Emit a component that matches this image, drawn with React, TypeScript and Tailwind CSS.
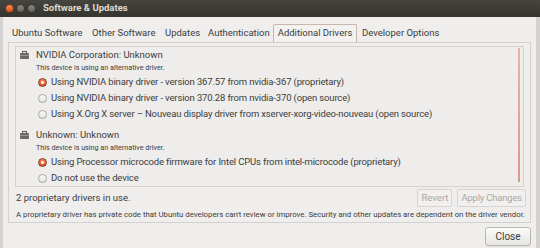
import React from "react";

const font = { fontFamily: 'Roboto, "Noto Sans", sans-serif' };

function Radio({ checked }: { checked?: boolean }) {
  if (checked) {
    return (
      <span className="w-[9px] h-[9px] rounded-full border border-[#8a3b1d] bg-gradient-to-b from-[#f38a5a] to-[#d5501c] flex items-center justify-center shrink-0">
        <span className="w-[3px] h-[3px] rounded-full bg-white" />
      </span>
    );
  }
  return (
    <span className="w-[9px] h-[9px] rounded-full border border-[#a8a6a2] bg-gradient-to-b from-[#fbfbfb] to-[#e4e3e1] shrink-0" />
  );
}

function Chip() {
  return (
    <svg width="9" height="8" viewBox="0 0 9 8" className="shrink-0">
      <rect x="2.5" y="0.5" width="4" height="2" fill="none" stroke="#5e5c58" strokeWidth="1" />
      <rect x="0" y="2" width="9" height="6" rx="1" fill="#6b6964" />
      <rect x="0" y="4" width="9" height="1" fill="#9b9994" />
    </svg>
  );
}

function Row({ checked, text }: { checked?: boolean; text: string }) {
  return (
    <div className="flex items-center gap-[4px] h-[16px] pl-[18px] text-[9.5px] tracking-[-0.15px] text-[#3c3c3c] whitespace-nowrap">
      <Radio checked={checked} />
      <span>{text}</span>
    </div>
  );
}

function Device({ name, rows }: { name: string; rows: { checked?: boolean; text: string }[] }) {
  return (
    <div className="flex flex-col">
      <div className="flex items-center gap-[7px] h-[14px] text-[9.5px] text-[#3c3c3c] whitespace-nowrap">
        <Chip />
        <span>{name}</span>
      </div>
      <div className="pl-[16px] h-[12px] text-[7.2px] text-[#3c3c3c] leading-[12px] whitespace-nowrap">
        This device is using an alternative driver.
      </div>
      {rows.map((r, i) => (
        <Row key={i} checked={r.checked} text={r.text} />
      ))}
    </div>
  );
}

export default function App() {
  return (
    <div style={font} className="w-[540px] h-[248px] flex flex-col overflow-hidden bg-[#efeeed]">
      {/* Title bar */}
      <div className="h-[17px] shrink-0 flex items-center bg-gradient-to-b from-[#45443f] to-[#35342f] px-[5px]">
        <div className="flex items-center gap-[2px]">
          <span className="w-[9px] h-[9px] rounded-full bg-gradient-to-b from-[#f58a5c] to-[#d8511d] border border-[#7a3a1c]" />
          <span className="w-[9px] h-[9px] rounded-full bg-gradient-to-b from-[#8a8882] to-[#65635e] border border-[#3a3935]" />
          <span className="w-[9px] h-[9px] rounded-full bg-gradient-to-b from-[#8a8882] to-[#65635e] border border-[#3a3935]" />
        </div>
        <span className="ml-[7px] text-[9.5px] font-bold text-[#dfdbd2] whitespace-nowrap">Software &amp; Updates</span>
      </div>

      {/* Body */}
      <div className="flex-1 flex flex-col border-l-[3px] border-r-[4px] border-[#d4d3d1] px-[5px]">
        {/* Tabs */}
        <div className="flex items-end h-[25px] ml-[-1px] text-[9.5px] text-[#3c3c3c] whitespace-nowrap">
          <span className="w-[80px] px-[5px] h-[17px] flex items-center">Ubuntu Software</span>
          <span className="w-[73px] px-[5px] h-[17px] flex items-center">Other Software</span>
          <span className="w-[43px] px-[5px] h-[17px] flex items-center">Updates</span>
          <span className="w-[70px] px-[5px] h-[17px] flex items-center">Authentication</span>
          <span className="w-[84px] h-[18px] flex items-center justify-center border border-b-0 border-[#c9b6ad] rounded-t-[2px] bg-[#f3f2f1]">Additional Drivers</span>
          <span className="px-[5px] h-[17px] flex items-center">Developer Options</span>
        </div>

        {/* Notebook page */}
        <div className="border border-[#d2d1cf] bg-[#efeeed] flex flex-col px-[6px] pt-[3px] pb-[1px]">
          {/* Scrolled area */}
          <div className="border border-[#d4d3d1] bg-[#eeedec] flex">
            <div className="flex-1 flex flex-col gap-[6px] pl-[4px] pt-[1px]">
              <Device
                name="NVIDIA Corporation: Unknown"
                rows={[
                  { checked: true, text: "Using NVIDIA binary driver - version 367.57 from nvidia-367 (proprietary)" },
                  { text: "Using NVIDIA binary driver - version 370.28 from nvidia-370 (open source)" },
                  { text: "Using X.Org X server \u2013 Nouveau display driver from xserver-xorg-video-nouveau (open source)" },
                ]}
              />
              <Device
                name="Unknown: Unknown"
                rows={[
                  { checked: true, text: "Using Processor microcode firmware for Intel CPUs from intel-microcode (proprietary)" },
                  { text: "Do not use the device" },
                ]}
              />
            </div>
            <div className="w-[2px] mr-[3px] mt-[1px] mb-[4px] bg-gradient-to-b from-[#e9b3a0] to-[#d89a84]" />
          </div>

          {/* Status row */}
          <div className="flex items-center justify-between h-[22px] mr-[-2px]">
            <span className="text-[9.5px] text-[#3c3c3c] whitespace-nowrap pl-[1px]">2 proprietary drivers in use.</span>
            <div className="flex gap-[5px]">
              <span className="h-[18px] px-[3px] flex items-center border border-[#d6d5d3] rounded-[2px] text-[9.5px] text-[#a9a8a5] bg-[#f1f0ef]">Revert</span>
              <span className="h-[18px] px-[3px] flex items-center border border-[#d6d5d3] rounded-[2px] text-[9.5px] tracking-[-0.2px] text-[#a9a8a5] bg-[#f1f0ef]">Apply Changes</span>
            </div>
          </div>
          <div className="text-[7.8px] text-[#3c3c3c] whitespace-nowrap h-[12px] leading-[12px] pl-[1px]">
            A proprietary driver has private code that Ubuntu developers can't review or improve. Security and other updates are dependent on the driver vendor.
          </div>
        </div>

        {/* Footer */}
        <div className="flex justify-end pt-[4px]">
          <span className="h-[19px] w-[46px] flex items-center justify-center border border-[#b8b7b4] rounded-[3px] bg-gradient-to-b from-[#fbfbfa] to-[#e6e5e3] text-[10px] text-[#3c3c3c] shadow-[0_1px_0_rgba(0,0,0,0.08)]">Close</span>
        </div>
      </div>
    </div>
  );
}
